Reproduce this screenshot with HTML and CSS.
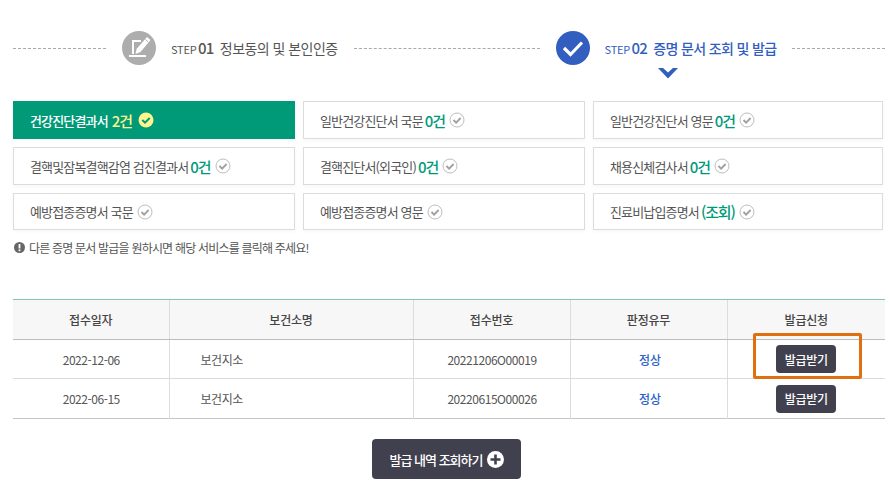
FILE: index.html
```html
<!DOCTYPE html>
<html lang="ko">
<head>
<meta charset="utf-8">
<title>증명 문서 조회 및 발급</title>
<link rel="stylesheet" href="styles.css">
</head>
<body>
<main class="page">
  <div class="steps">
    <span class="dash dash-a"></span>
    <span class="circle circle-gray">
      <svg width="34" height="34" viewBox="0 0 34 34"><path d="M19 10H11v13" fill="none" stroke="#fff" stroke-width="2"/><path d="M7 25h17" fill="none" stroke="#fff" stroke-width="2"/><path d="M25 6l3.500 3-10 12-5 2 1-5z" fill="#fff"/><path d="M23.500 8.500l2.500 2.200" stroke="#adadad" stroke-width="1"/></svg>
    </span>
    <span class="step-label"><span class="step-word">STEP</span> <b class="step-num">01</b><span class="step-title">정보동의 및 본인인증</span></span>
    <span class="dash dash-b"></span>
    <span class="circle circle-blue">
      <svg width="34" height="34" viewBox="0 0 34 34"><path d="M8 17l6.500 6.500L26 11.500" fill="none" stroke="#fff" stroke-width="3.200"/></svg>
    </span>
    <span class="step-label step-active"><span class="step-word">STEP</span> <b class="step-num">02</b><span class="step-title">증명 문서 조회 및 발급</span>
      <svg class="step-arrow" width="20" height="11" viewBox="0 0 20 11"><path d="M0 0h5l5 4.500L15 0h5L10 10.500z" fill="#325ebf"/></svg>
    </span>
    <span class="dash dash-c"></span>
  </div>

  <div class="cards">
    <a class="card card-on">건강진단결과서 <em>2건</em>
      <svg class="tick" width="16" height="16" viewBox="0 0 16 16"><circle cx="8" cy="8" r="7.500" fill="#fdf58d"/><path d="M4.300 8l2.700 2.700 4.700-4.700" fill="none" stroke="#009a78" stroke-width="2"/></svg></a>
    <a class="card">일반건강진단서 국문 <em>0건</em>
      <svg class="tick" width="16" height="16" viewBox="0 0 16 16"><circle cx="8" cy="8" r="7" fill="#fff" stroke="#bdbdbd"/><path d="M4.500 8l2.600 2.600 4.500-4.600" fill="none" stroke="#a0a0a0" stroke-width="1.800"/></svg></a>
    <a class="card">일반건강진단서 영문 <em>0건</em>
      <svg class="tick" width="16" height="16" viewBox="0 0 16 16"><circle cx="8" cy="8" r="7" fill="#fff" stroke="#bdbdbd"/><path d="M4.500 8l2.600 2.600 4.500-4.600" fill="none" stroke="#a0a0a0" stroke-width="1.800"/></svg></a>
    <a class="card">결핵및잠복결핵감염 검진결과서 <em>0건</em>
      <svg class="tick" width="16" height="16" viewBox="0 0 16 16"><circle cx="8" cy="8" r="7" fill="#fff" stroke="#bdbdbd"/><path d="M4.500 8l2.600 2.600 4.500-4.600" fill="none" stroke="#a0a0a0" stroke-width="1.800"/></svg></a>
    <a class="card">결핵진단서(외국인) <em>0건</em>
      <svg class="tick" width="16" height="16" viewBox="0 0 16 16"><circle cx="8" cy="8" r="7" fill="#fff" stroke="#bdbdbd"/><path d="M4.500 8l2.600 2.600 4.500-4.600" fill="none" stroke="#a0a0a0" stroke-width="1.800"/></svg></a>
    <a class="card">채용신체검사서 <em>0건</em>
      <svg class="tick" width="16" height="16" viewBox="0 0 16 16"><circle cx="8" cy="8" r="7" fill="#fff" stroke="#bdbdbd"/><path d="M4.500 8l2.600 2.600 4.500-4.600" fill="none" stroke="#a0a0a0" stroke-width="1.800"/></svg></a>
    <a class="card">예방접종증명서 국문
      <svg class="tick" width="16" height="16" viewBox="0 0 16 16"><circle cx="8" cy="8" r="7" fill="#fff" stroke="#bdbdbd"/><path d="M4.500 8l2.600 2.600 4.500-4.600" fill="none" stroke="#a0a0a0" stroke-width="1.800"/></svg></a>
    <a class="card">예방접종증명서 영문
      <svg class="tick" width="16" height="16" viewBox="0 0 16 16"><circle cx="8" cy="8" r="7" fill="#fff" stroke="#bdbdbd"/><path d="M4.500 8l2.600 2.600 4.500-4.600" fill="none" stroke="#a0a0a0" stroke-width="1.800"/></svg></a>
    <a class="card">진료비납입증명서 <em>(조회)</em>
      <svg class="tick" width="16" height="16" viewBox="0 0 16 16"><circle cx="8" cy="8" r="7" fill="#fff" stroke="#bdbdbd"/><path d="M4.500 8l2.600 2.600 4.500-4.600" fill="none" stroke="#a0a0a0" stroke-width="1.800"/></svg></a>
  </div>

  <p class="notice">
    <svg width="11" height="11" viewBox="0 0 11 11"><circle cx="5.500" cy="5.500" r="5.500" fill="#666"/><rect x="4.600" y="2" width="1.800" height="4.500" fill="#fff"/><rect x="4.600" y="7.400" width="1.800" height="1.800" fill="#fff"/></svg>
    다른 증명 문서 발급을 원하시면 해당 서비스를 클릭해 주세요!
  </p>

  <div class="table-wrap">
    <table class="result">
      <colgroup><col class="c1"><col class="c2"><col class="c3"><col class="c4"><col class="c5"></colgroup>
      <thead>
        <tr><th>접수일자</th><th>보건소명</th><th>접수번호</th><th>판정유무</th><th>발급신청</th></tr>
      </thead>
      <tbody>
        <tr><td>2022-12-06</td><td class="left">보건지소</td><td>20221206O00019</td><td class="ok">정상</td><td class="action"><button class="issue">발급받기</button></td></tr>
        <tr><td>2022-06-15</td><td class="left">보건지소</td><td>20220615O00026</td><td class="ok">정상</td><td class="action"><button class="issue">발급받기</button></td></tr>
      </tbody>
    </table>
    <span class="highlight"></span>
  </div>

  <div class="more-row">
    <button class="more">발급 내역 조회하기
      <svg width="17" height="17" viewBox="0 0 17 17"><circle cx="8.500" cy="8.500" r="8.500" fill="#fff"/><path d="M8.500 3.500v10M3.500 8.500h10" stroke="#41404f" stroke-width="2.600"/></svg>
    </button>
  </div>
</main>
</body>
</html>
```

FILE: styles.css
```css
* { box-sizing: border-box; }
html, body { margin: 0; padding: 0; background: #fff; }
body { font-family: "Noto Sans CJK KR", "Noto Sans", sans-serif; color: #555; overflow: hidden; }
.page { width: 889px; height: 486px; padding: 0 0 0 13px; }

.steps { height: 101px; display: flex; align-items: flex-start; padding-top: 31px; }
.dash { display: block; height: 1px; margin-top: 17px; border-top: 1px dashed #a9a9a9; flex: none; }
.dash-a { width: 93px; margin-right: 16px; }
.dash-b { width: 186px; margin-left: 16px; margin-right: 16px; }
.dash-c { width: 93px; margin-left: 16px; }
.circle { width: 34px; height: 34px; border-radius: 50%; flex: none; display: block; }
.circle svg { display: block; }
.circle-gray { background: #adadad; }
.circle-blue { background: #325ebf; }
.step-label { display: block; position: relative; margin-left: 15px; height: 34px; line-height: 34px; white-space: nowrap; font-size: 14px; letter-spacing: -0.55px; color: #555; }
.step-word { font-size: 11px; letter-spacing: -0.2px; }
.step-num { font-size: 15px; font-weight: 500; letter-spacing: -0.6px; margin-left: -2px; }
.step-title { margin-left: 6px; }
.step-active { color: #325ebf; font-weight: 500; letter-spacing: -0.65px; }
.step-active .step-word { font-weight: 400; }
.step-arrow { position: absolute; left: 53px; top: 37px; }

.cards { width: 870px; display: grid; grid-template-columns: 282px 282px 290px; gap: 8px; grid-template-rows: 38px 38px 37px; }
.card { display: flex; align-items: center; gap: 4px; padding-left: 16px; border: 1px solid #dcdcdc; background: #fff; font-size: 13px; letter-spacing: -0.85px; color: #555; white-space: nowrap; box-shadow: 0 2px 4px rgba(0,0,0,.03); }
.card em { font-style: normal; font-weight: 500; font-size: 15px; color: #009a78; letter-spacing: -1.1px; margin-left: -2px; }
.card-on { background: #009a78; border-color: #009a78; color: #fff; font-weight: 500; gap: 6px; }
.card-on em { color: #fdf58d; }
.tick { flex: none; }

.notice { margin: 8px 0 0; height: 18px; display: flex; align-items: center; gap: 4px; padding-left: 1px; font-size: 12px; letter-spacing: -0.8px; color: #555; }
.notice svg { flex: none; margin-top: 1px; }

.table-wrap { position: relative; width: 872px; margin-top: 43px; }
.result { width: 872px; border-collapse: collapse; table-layout: fixed; border-top: 1px solid #7fc8b4; border-bottom: 1px solid #c4c4c4; }
.c1 { width: 156px; } .c2 { width: 244px; } .c3 { width: 157px; } .c4 { width: 157px; } .c5 { width: 158px; }
.result th { height: 40px; background: #f7f7f7; font-size: 12px; font-weight: 500; color: #444; border-top: 1px solid #7fc8b4; border-bottom: 1px solid #bcbcbc; border-left: 1px solid #dcdcdc; padding: 0; letter-spacing: -0.2px; }
.result td { height: 39px; font-size: 12px; color: #555; text-align: center; border-left: 1px solid #dcdcdc; border-bottom: 1px solid #dcdcdc; padding: 0 0 0 1px; letter-spacing: -0.45px; }
.result th:first-child, .result td:first-child { border-left: 0; }
.result tr:last-child td { border-bottom: 0; height: 40px; }
.result td.left { text-align: left; padding-left: 31px; }
.result td.ok { color: #2a62c9; font-weight: 500; padding-left: 3px; letter-spacing: 0; }
.result td.action { padding-left: 0; }
.issue { width: 60px; height: 28px; border: 0; border-radius: 4px; background: #41404f; color: #fff; font-family: inherit; font-size: 12px; font-weight: 500; padding: 0; letter-spacing: -0.3px; display: inline-block; vertical-align: middle; }
.highlight { position: absolute; left: 740px; top: 34px; width: 109px; height: 46px; border: 3px solid #e0700f; border-radius: 2px; }

.more-row { width: 872px; display: flex; justify-content: center; margin-top: 20px; padding-right: 5px; }
.more { width: 149px; height: 40px; border: 0; border-radius: 4px; background: #41404f; color: #fff; font-family: inherit; font-size: 13px; font-weight: 500; letter-spacing: -1px; display: flex; align-items: center; justify-content: center; gap: 5px; padding: 0 0 0 1px; }
```
